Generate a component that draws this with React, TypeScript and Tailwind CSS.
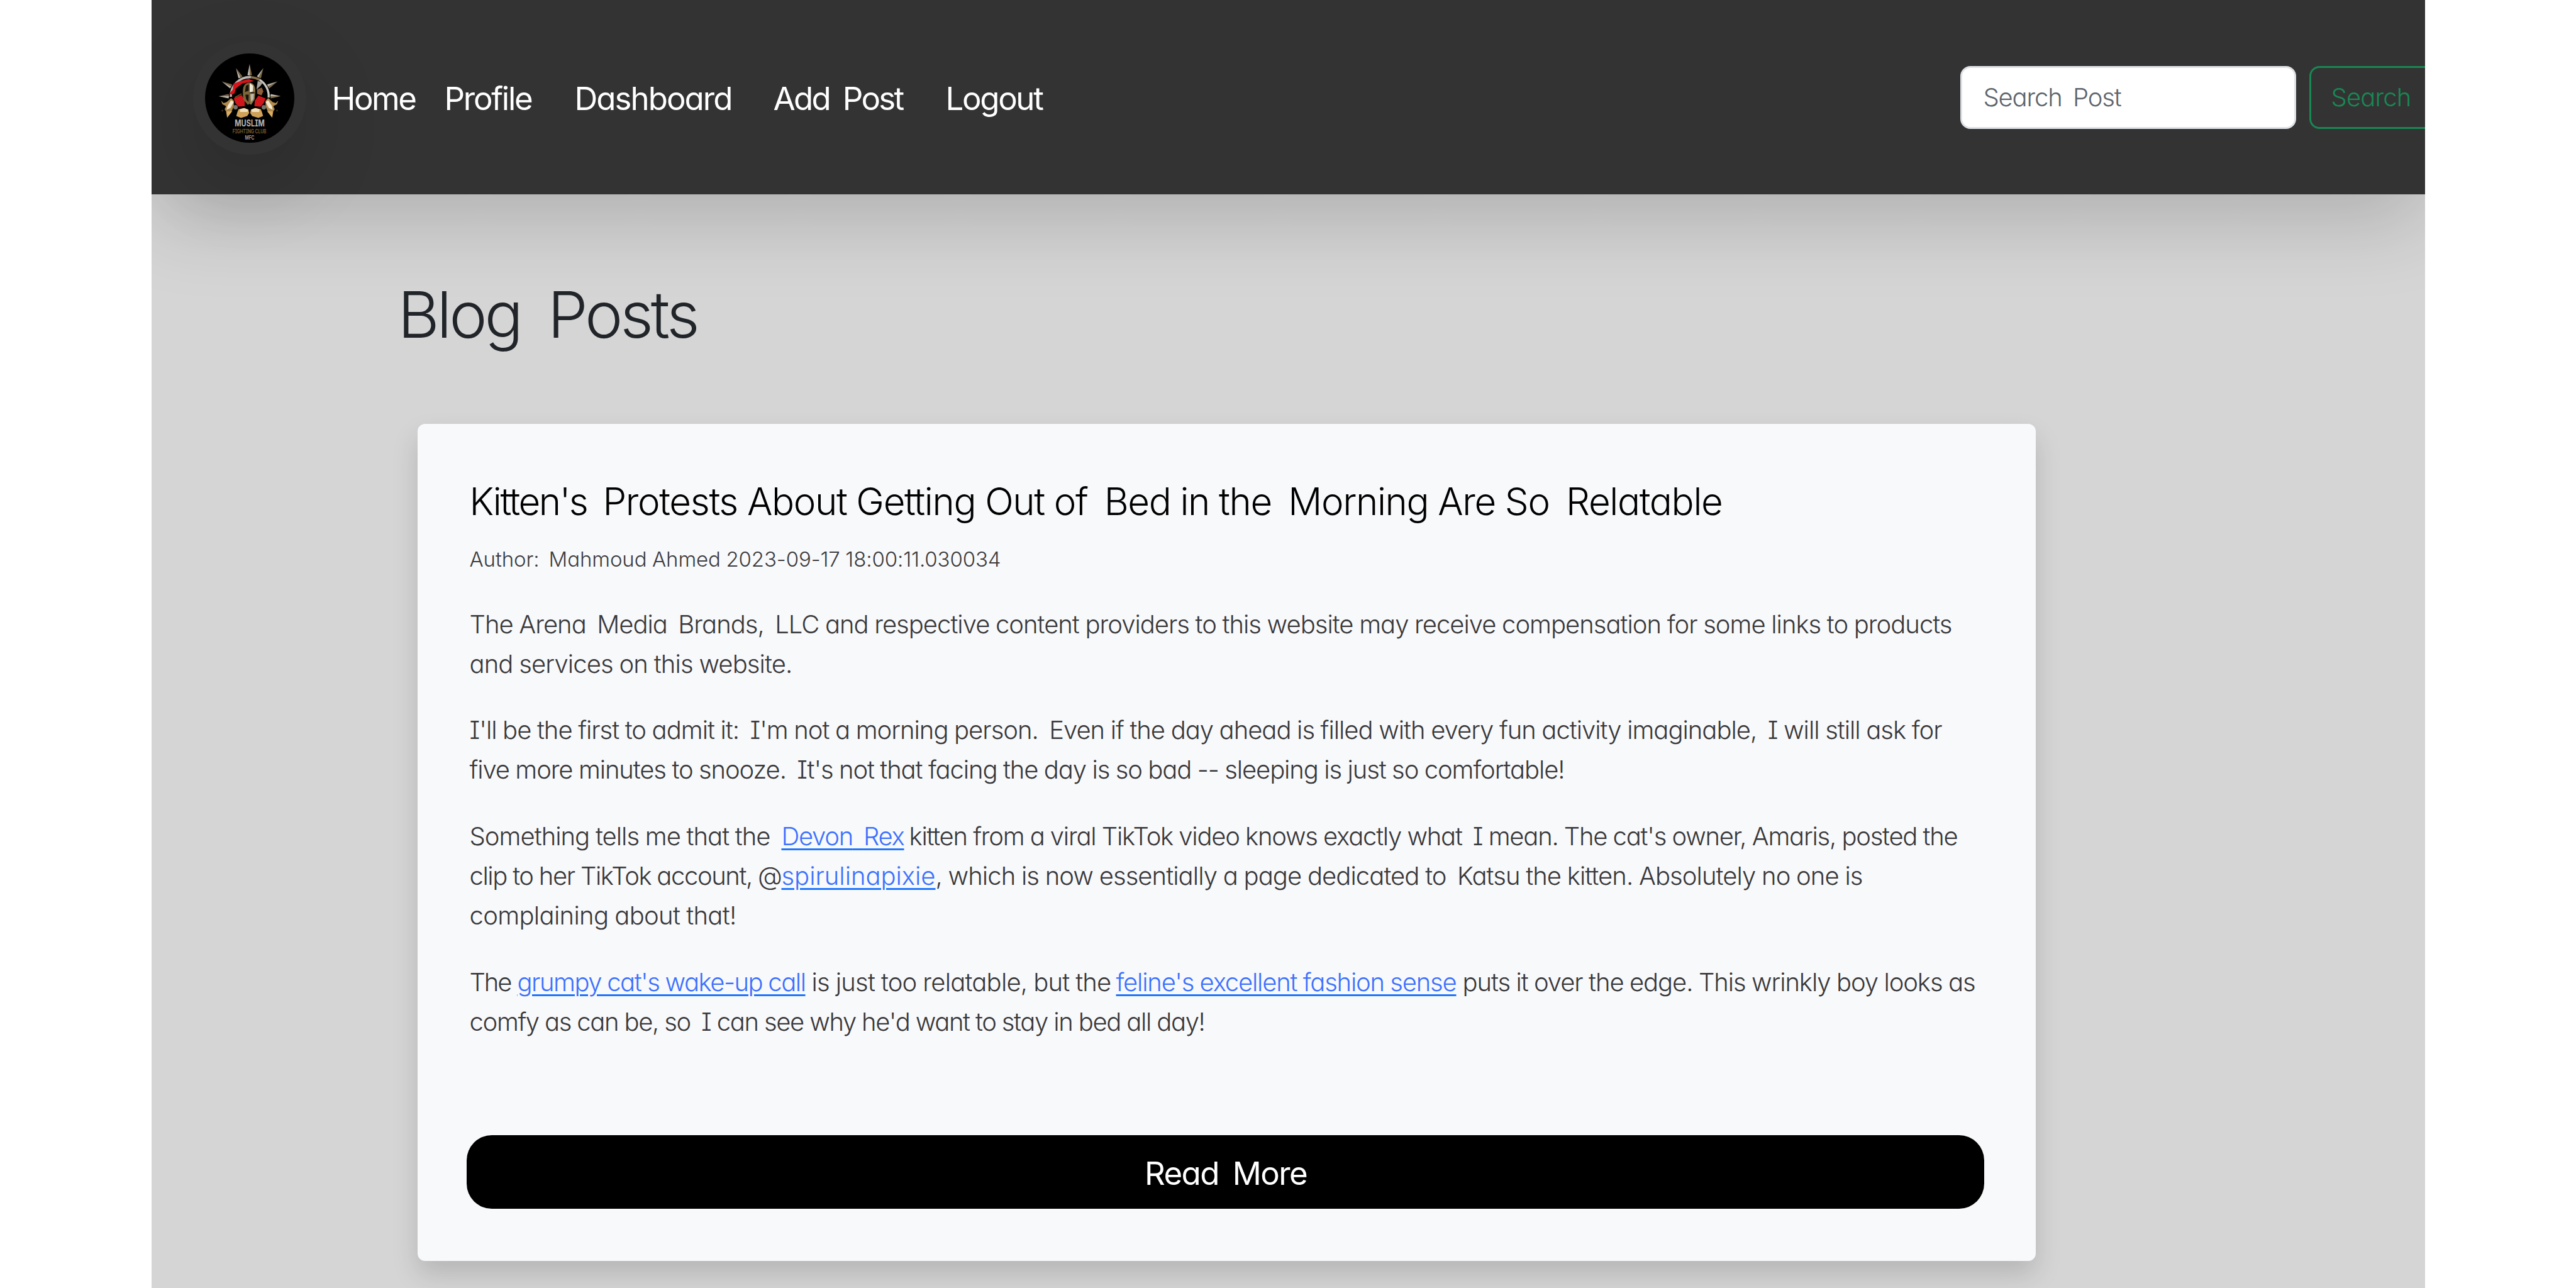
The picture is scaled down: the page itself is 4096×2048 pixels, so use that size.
import { Fragment, useLayoutEffect, useRef, useState, type ReactNode } from "react";

const WIDE_GAP = /( )(?=[BDEFHIKLMNPR])/;

/* One unbroken run of text whose letter spacing is computed so it fills its box. */
function Run({ className = "", children }: { className?: string; children: string }) {
  const box = useRef<HTMLSpanElement>(null);
  const ink = useRef<HTMLSpanElement>(null);
  const [spacing, setSpacing] = useState(0);

  useLayoutEffect(() => {
    if (!box.current || !ink.current) return;
    const room = box.current.getBoundingClientRect().width;
    const natural = ink.current.getBoundingClientRect().width;
    setSpacing((room - natural) / children.length);
  }, [children]);

  return (
    <span ref={box} className={"block shrink-0 whitespace-pre " + className}>
      <span ref={ink} style={{ letterSpacing: spacing }}>
        {children.split(WIDE_GAP).map((part, i) =>
          i % 2 === 1 ? (
            <span key={i} className="[word-spacing:0.18em]">
              {part}
            </span>
          ) : (
            <Fragment key={i}>{part}</Fragment>
          ),
        )}
      </span>
    </span>
  );
}

function Line({ children }: { children: ReactNode }) {
  return <span className="flex h-[63.27px]">{children}</span>;
}

function Link({ className, children }: { className: string; children: string }) {
  return (
    <a href="#" className="text-[#3b71fe] underline decoration-[#1f76ff] decoration-[3px] underline-offset-[5px]">
      <Run className={className}>{children}</Run>
    </a>
  );
}

function Spike({ angle, length }: { angle: number; length: number }) {
  return (
    <g transform={`rotate(${angle} 390 385)`}>
      <path d={`M390 ${385 - length} L372 215 L390 219 Z`} fill="#bab5ad" />
      <path d={`M390 ${385 - length} L408 215 L390 219 Z`} fill="#7b6845" />
    </g>
  );
}

function Logo() {
  return (
    <svg viewBox="30 40 720 720" className="size-[142px]" aria-label="Muslim Fighting Club">
      <circle cx="390" cy="400" r="360" fill="#000" />
      <Spike angle={0} length={260} />
      <Spike angle={-26} length={252} />
      <Spike angle={26} length={252} />
      <Spike angle={-62} length={255} />
      <Spike angle={62} length={255} />
      <Spike angle={-90} length={250} />
      <Spike angle={90} length={250} />
      <circle cx="390" cy="385" r="160" fill="#000" />
      <path d="M238 390 A154 154 0 0 1 400 231" fill="none" stroke="#b9b5b0" strokeWidth="18" />
      <path d="M400 231 A154 154 0 0 1 470 253" fill="none" stroke="#8a6f48" strokeWidth="18" />
      <path d="M470 252 A154 154 0 0 1 543 395" fill="none" stroke="#c9c7c2" strokeWidth="17" />
      <path d="M455 262 L495 275 L478 300 L445 330 Z" fill="#a7a39b" />
      <path d="M225 365 L255 330 L258 285 L300 268 L380 245 L425 262 L385 272 L330 282 L295 310 L276 325 L268 362 L245 372 Z" fill="#d3151b" />
      <path d="M262 402 L325 375 L350 420 L350 465 L300 468 L275 440 Z" fill="#cf171b" />
      <path d="M518 402 L460 380 L432 420 L428 465 L478 470 L503 440 Z" fill="#cf171b" />
      <path d="M270 395 L325 365" stroke="#6f5526" strokeWidth="8" />
      <path d="M450 330 L488 315 L500 345 L485 378 L450 365 Z" fill="#8e5f38" />
      <path d="M388 275 C350 278 335 305 335 350 L338 410 L375 455 L388 445 Z" fill="#7b6439" />
      <path d="M360 300 L382 290 L382 340 L352 350 Z M355 372 L382 372 L380 430 L362 410 Z" fill="#17120a" />
      <path d="M388 275 C425 280 437 310 435 350 L430 410 L402 455 L388 445 Z" fill="#8b7444" />
      <path d="M390 280 L418 300 L416 345 L390 355 Z" fill="#efe9da" />
      <path d="M396 370 L424 365 L420 408 L402 430 Z" fill="#bdbab2" />
      <path d="M392 357 L430 357" stroke="#17120a" strokeWidth="8" />
      {[1, -1].map((side) => (
        <g key={side} transform={side === 1 ? undefined : "translate(780 0) scale(-1 1)"}>
          <path d="M160 420 L180 440 L205 432 L240 400 L262 420 L262 460 L250 495 L235 520 L208 558 L200 508 L188 490 L200 465 L170 450 Z" fill="#b08a4c" />
          <path d="M240 418 L262 430 L236 478 L204 494 L212 462 Z" fill="#f3e6cf" />
          <path d="M202 508 L250 505 L210 556 Z" fill="#d9ac60" />
          <circle cx="276" cy="474" r="18" fill="#77736d" />
          <path d="M300 490 L345 480 L380 492 L386 520 L370 545 L320 560 L282 545 L290 515 Z" fill="#cfa159" />
          <path d="M312 490 L345 480 L378 494 L372 512 L312 512 Z" fill="#f2dfba" />
          <circle cx="170" cy="501" r="7" fill="#3c3020" />
        </g>
      ))}
      <text x="390" y="628" textAnchor="middle" textLength="240" lengthAdjust="spacingAndGlyphs" fontSize="72" fontWeight="700" fill="#b4b4b4" className="font-['Inter']">
        MUSLIM
      </text>
      <text x="388" y="684" textAnchor="middle" textLength="272" lengthAdjust="spacingAndGlyphs" fontSize="44" fontWeight="600" fill="#80602f" className="font-['Inter']">
        FIGHTING CLUB
      </text>
      <text x="390" y="735" textAnchor="middle" textLength="76" lengthAdjust="spacingAndGlyphs" fontSize="46" fontWeight="600" fill="#a6a6a6" className="font-['Inter']">
        MFC
      </text>
    </svg>
  );
}

function Navbar() {
  return (
    <nav className="flex h-[309px] items-center bg-[#333333] pl-[66px] shadow-[0_42px_126px_rgba(0,0,0,0.175)]">
      <a
        href="#"
        className="mt-[2px] flex size-[180px] shrink-0 items-center justify-center rounded-full bg-[#333333] shadow-[0_42px_126px_rgba(0,0,0,0.175)]"
      >
        <Logo />
      </a>
      <div className="mt-[4px] ml-[41px] flex text-[51px] leading-[76px] font-normal text-white">
        <Run className="w-[133px]">Home</Run>
        <Run className="ml-[46px] w-[139px]">Profile</Run>
        <Run className="ml-[68px] w-[250px]">Dashboard</Run>
        <Run className="ml-[66px] w-[206px]">Add Post</Run>
        <Run className="ml-[68px] w-[154px]">Logout</Run>
      </div>
      <form className="ml-[1459px] flex shrink-0 gap-[21px] text-[40px] leading-[63px]">
        <div className="flex h-[100px] w-[534px] items-center rounded-[16px] border-[3px] border-[#dee2e6] bg-white pl-[34px] text-[#5d646b]">
          <Run className="w-[219px]">Search Post</Run>
        </div>
        <button
          type="button"
          className="flex h-[100px] w-[201px] items-center rounded-[16px] border-[3px] border-[#198754] pl-[32px] text-[#198754]"
        >
          <Run className="w-[127px]">Search</Run>
        </button>
      </form>
    </nav>
  );
}

function PostCard() {
  return (
    <article className="mt-[110px] ml-[423px] flex h-[1331px] w-[2573px] flex-col rounded-[12px] bg-[#f8f9fb] pt-[85px] pl-[83px] shadow-[0_21px_42px_rgba(0,0,0,0.15)]">
      <h2 className="flex text-[60px] leading-[76px] text-black">
        <Run className="w-[212px] [word-spacing:0.18em]">{"Kitten's "}</Run>
        <Run className="w-[1780px]">Protests About Getting Out of Bed in the Morning Are So Relatable</Run>
      </h2>
      <small className="mt-[29px] text-[33px] leading-[50px] text-[#3c3c3e]">
        <Run className="w-[845px]">Author: Mahmoud Ahmed 2023-09-17 18:00:11.030034</Run>
      </small>
      <div className="mt-[47px] flex flex-col gap-[42.2px] text-[40px] leading-[63.27px] text-[#38383a]">
        <p>
          <Line>
            <Run className="w-[2357px]">
              The Arena Media Brands, LLC and respective content providers to this website may receive compensation for some links to products
            </Run>
          </Line>
          <Line>
            <Run className="w-[513px]">and services on this website.</Run>
          </Line>
        </p>
        <p>
          <Line>
            <Run className="w-[2341px]">
              {"I'll be the first to admit it: I'm not a morning person. Even if the day ahead is filled with every fun activity imaginable, I will still ask for"}
            </Run>
          </Line>
          <Line>
            <Run className="w-[1741px]">
              {"five more minutes to snooze. It's not that facing the day is so bad -- sleeping is just so comfortable!"}
            </Run>
          </Line>
        </p>
        <p>
          <Line>
            <Run className="w-[478px]">Something tells me that the</Run>
            <Link className="ml-[18px] w-[195px]">Devon Rex</Link>
            <Run className="ml-[8px] w-[1667px]">
              {"kitten from a viral TikTok video knows exactly what I mean. The cat's owner, Amaris, posted the"}
            </Run>
          </Line>
          <Line>
            <Run className="w-[496px]">clip to her TikTok account, @</Run>
            <Link className="w-[245px]">spirulinapixie</Link>
            <Run className="w-[1474px]">
              , which is now essentially a page dedicated to Katsu the kitten. Absolutely no one is
            </Run>
          </Line>
          <Line>
            <Run className="w-[424px]">complaining about that!</Run>
          </Line>
        </p>
        <p>
          <Line>
            <Run className="w-[66px]">The</Run>
            <Link className="ml-[10px] w-[458px]">{"grumpy cat's wake-up call"}</Link>
            <Run className="ml-[10px] w-[476px]">is just too relatable, but the</Run>
            <Link className="ml-[8px] w-[541px]">{"feline's excellent fashion sense"}</Link>
            <Run className="ml-[10px] w-[815px]">puts it over the edge. This wrinkly boy looks as</Run>
          </Line>
          <Line>
            <Run className="w-[1169px]">{"comfy as can be, so I can see why he'd want to stay in bed all day!"}</Run>
          </Line>
        </p>
      </div>
      <button
        type="button"
        className="mt-[149px] -ml-[5px] flex h-[117px] w-[2413px] items-center justify-center rounded-[40px] bg-black pt-[5px] text-[51px] leading-[76px] font-normal text-white"
      >
        <Run className="ml-[2px] w-[258px]">Read More</Run>
      </button>
    </article>
  );
}

export default function App() {
  return (
    <div className="h-[2048px] w-[4096px] overflow-hidden bg-white font-['Inter',sans-serif] font-light [font-feature-settings:'cv11','cv08'] [word-spacing:-0.04em]">
      <main className="mx-auto h-full w-[3615px] overflow-hidden bg-[#d5d5d5]">
        <Navbar />
        <h1 className="mt-[127.5px] ml-[392px] text-[102px] leading-[126px] text-[#212529]">
          <Run className="w-[476px]">Blog Posts</Run>
        </h1>
        <div className="pt-px">
          <PostCard />
        </div>
      </main>
    </div>
  );
}
